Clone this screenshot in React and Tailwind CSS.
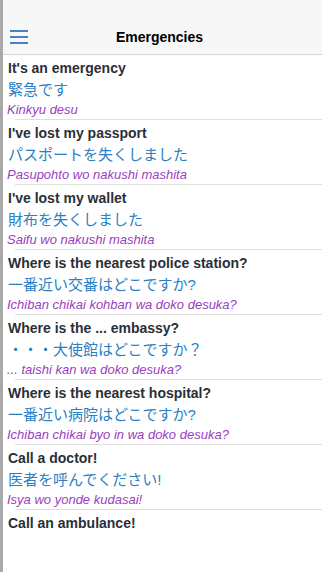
const phrases = [
  { en: "It's an emergency", ja: "緊急です", ro: "Kinkyu desu" },
  { en: "I've lost my passport", ja: "パスポートを失くしました", ro: "Pasupohto wo nakushi mashita" },
  { en: "I've lost my wallet", ja: "財布を失くしました", ro: "Saifu wo nakushi mashita" },
  { en: "Where is the nearest police station?", ja: "一番近い交番はどこですか?", ro: "Ichiban chikai kohban wa doko desuka?" },
  { en: "Where is the ... embassy?", ja: "・・・大使館はどこですか？", ro: "... taishi kan wa doko desuka?" },
  { en: "Where is the nearest hospital?", ja: "一番近い病院はどこですか?", ro: "Ichiban chikai byo in wa doko desuka?" },
  { en: "Call a doctor!", ja: "医者を呼んでください!", ro: "Isya wo yonde kudasai!" },
  { en: "Call an ambulance!", ja: "", ro: "" },
];

export default function App() {
  return (
    <div className="w-[322px] h-[572px] overflow-hidden bg-white border-l-[3px] border-[#a9a9a9] font-['Liberation_Sans','Noto_Sans_CJK_JP',sans-serif]">
      {/* header */}
      <div className="h-[55px] bg-[#f7f7f7] border-b border-[#d6d6d6] pt-5 flex items-center relative">
        <button className="pl-[7px] flex flex-col gap-[3.5px]">
          <span className="block w-[18px] h-[2.5px] bg-[#4a80c8]" />
          <span className="block w-[18px] h-[2.5px] bg-[#4a80c8]" />
          <span className="block w-[18px] h-[2.5px] bg-[#4a80c8]" />
        </button>
        <h1 className="absolute left-0 right-[6px] top-5 h-[34px] flex items-center justify-center text-[14px] font-bold text-black">
          Emergencies
        </h1>
      </div>

      {/* phrases */}
      <div className="flex flex-col">
        {phrases.map((p, i) => (
          <div key={i} className="h-[65px] flex flex-col pl-[5px]">
            <div className="h-[64px] flex flex-col">
              <p className="h-[26px] leading-[26px] text-[14px] font-bold text-[#2a2f37]">{p.en}</p>
              <p className="h-[19px] leading-[18px] text-[15px] text-[#2a7fc5]">{p.ja}</p>
              <p className="h-[19px] leading-[20px] text-[13px] italic text-[#9a40c0] -ml-[1px]">{p.ro}</p>
            </div>
            {i < phrases.length - 1 && <div className="ml-[7px] h-px bg-[#dedede]" />}
          </div>
        ))}
      </div>
    </div>
  );
}
